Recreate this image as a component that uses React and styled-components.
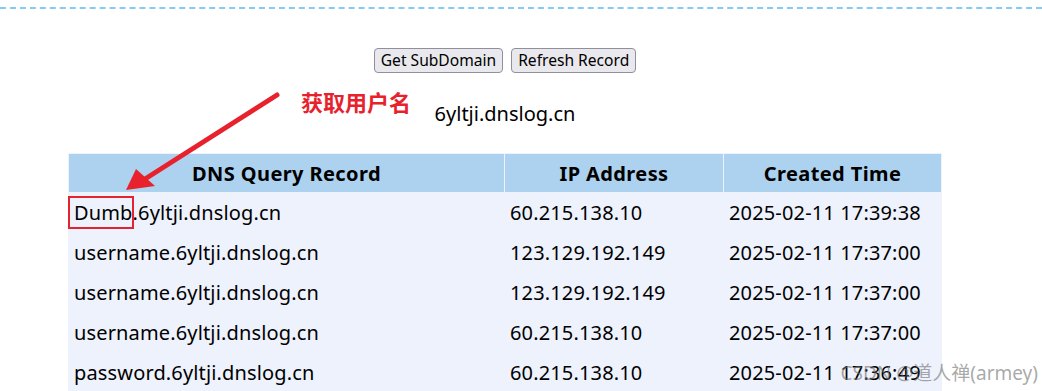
import React from 'react';
import styled, { createGlobalStyle } from 'styled-components';

const GlobalStyle = createGlobalStyle`
  html, body {
    margin: 0;
    padding: 0;
    background: #ffffff;
  }
  body {
    font-family: "Noto Sans", "Noto Sans CJK SC", sans-serif;
    color: #000000;
  }
`;

const Page = styled.div`
  position: relative;
  width: 1042px;
  min-height: 391px;
  overflow: hidden;
`;

const Divider = styled.div`
  margin-top: 7px;
  border-top: 2px dashed #87cbf5;
`;

const Content = styled.main`
  width: 1010px;
  display: flex;
  flex-direction: column;
  align-items: center;
`;

const ButtonRow = styled.div`
  margin-top: 39px;
  display: flex;
  gap: 8px;
`;

const Button = styled.button`
  height: 25px;
  padding: 0 6px;
  font-family: "Noto Sans", sans-serif;
  font-size: 15.6px;
  line-height: 23px;
  white-space: nowrap;
  color: #000;
  background: #e9e9ed;
  border: 1px solid #8f8f9d;
  border-radius: 4px;
`;

const Domain = styled.div`
  margin-top: 27px;
  font-size: 20px;
  line-height: 28px;
`;

const Table = styled.table`
  margin-top: 25px;
  width: 874px;
  table-layout: fixed;
  border-collapse: separate;
  border-spacing: 1px;
  background: #eef2fd;
`;

const Th = styled.th`
  width: ${({ w }) => w}px;
  height: 38px;
  padding: 0;
  background: #acd2ef;
  font-size: 20px;
  font-weight: 700;
  letter-spacing: 0.4px;
  text-align: center;
`;

const Td = styled.td`
  height: 39px;
  padding: 0 5px;
  font-size: 20px;
  letter-spacing: 0.15px;
  text-align: left;
  white-space: nowrap;
  background: #eef2fd;
`;

const Label = styled.div`
  position: absolute;
  left: 301px;
  top: 90px;
  font-family: "Noto Sans CJK SC", sans-serif;
  font-size: 22px;
  font-weight: 700;
  line-height: 22px;
  color: #e8222d;
`;

const Highlight = styled.div`
  position: absolute;
  left: 68px;
  top: 196px;
  width: 62px;
  height: 29px;
  border: 2px solid #e3232d;
`;

const Arrow = styled.svg`
  position: absolute;
  left: 0;
  top: 0;
  pointer-events: none;
`;

const Watermark = styled.div`
  position: absolute;
  right: 4px;
  top: 360px;
  font-family: "Noto Sans", "Noto Sans CJK SC", sans-serif;
  font-size: 19px;
  line-height: 26px;
  color: rgba(110, 110, 110, 0.6);
  white-space: nowrap;
`;

const records = [
  ['Dumb.6yltji.dnslog.cn', '60.215.138.10', '2025-02-11 17:39:38'],
  ['username.6yltji.dnslog.cn', '123.129.192.149', '2025-02-11 17:37:00'],
  ['username.6yltji.dnslog.cn', '123.129.192.149', '2025-02-11 17:37:00'],
  ['username.6yltji.dnslog.cn', '60.215.138.10', '2025-02-11 17:37:00'],
  ['password.6yltji.dnslog.cn', '60.215.138.10', '2025-02-11 17:36:49'],
];

const App = () => {
  return (
    <Page>
      <GlobalStyle />
      <Divider />
      <Content>
        <ButtonRow>
          <Button>Get SubDomain</Button>
          <Button>Refresh Record</Button>
        </ButtonRow>
        <Domain>6yltji.dnslog.cn</Domain>
        <Table>
          <thead>
            <tr>
              <Th w={435}>DNS Query Record</Th>
              <Th w={218}>IP Address</Th>
              <Th w={217}>Created Time</Th>
            </tr>
          </thead>
          <tbody>
            {records.map((r, i) => (
              <tr key={i}>
                <Td>{r[0]}</Td>
                <Td>{r[1]}</Td>
                <Td>{r[2]}</Td>
              </tr>
            ))}
          </tbody>
        </Table>
      </Content>

      <Label>获取用户名</Label>
      <Highlight />
      <Arrow width="1042" height="391" xmlns="http://www.w3.org/2000/svg">
        <line x1="277" y1="95" x2="145" y2="179" stroke="#e8222d" strokeWidth="5" strokeLinecap="round" />
        <polygon points="126,190 136,169 155,186" fill="#e8222d" />
      </Arrow>
      <Watermark>CSDN @道人禅(armey)</Watermark>
    </Page>
  );
};

export default App;
